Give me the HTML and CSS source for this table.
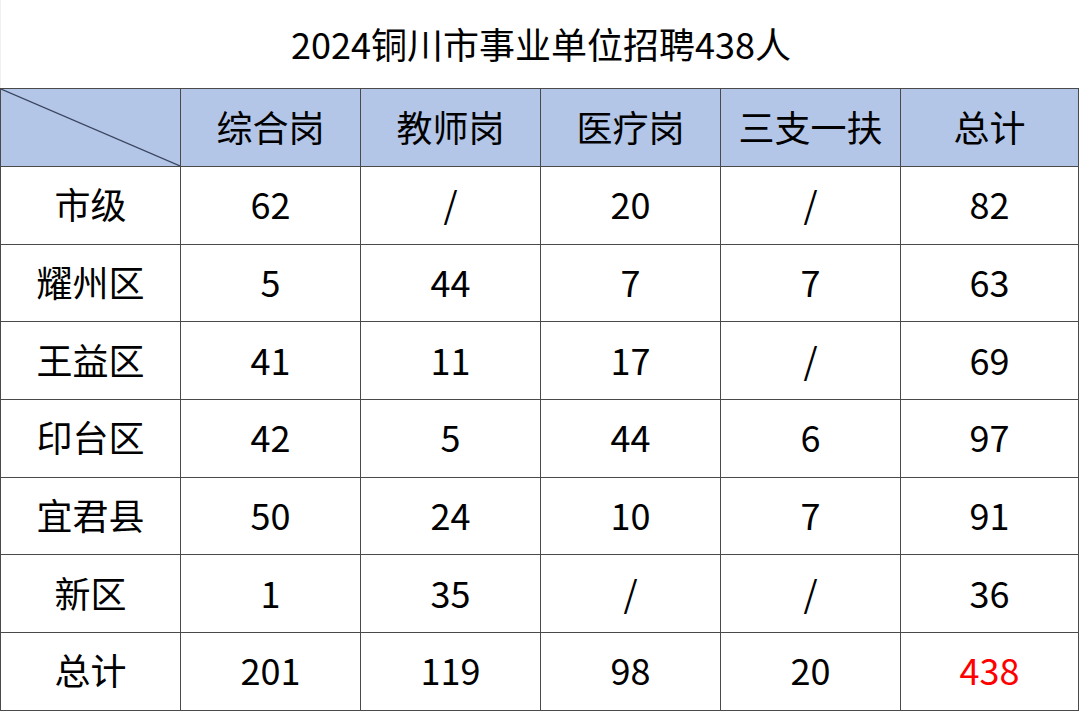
FILE: index.html
```html
<!DOCTYPE html>
<html lang="zh-CN">
<head>
<meta charset="utf-8">
<title>2024铜川市事业单位招聘438人</title>
<link rel="stylesheet" href="styles.css">
</head>
<body>
<div class="page">
  <div class="title">2024铜川市事业单位招聘438人</div>
  <div class="grid">
    <div class="cell head corner"><svg class="diag" viewBox="0 0 100 100" preserveAspectRatio="none"><line x1="0" y1="0" x2="100" y2="100" vector-effect="non-scaling-stroke"/></svg></div>
    <div class="cell head">综合岗</div>
    <div class="cell head">教师岗</div>
    <div class="cell head">医疗岗</div>
    <div class="cell head">三支一扶</div>
    <div class="cell head">总计</div>

    <div class="cell">市级</div><div class="cell">62</div><div class="cell">/</div><div class="cell">20</div><div class="cell">/</div><div class="cell">82</div>
    <div class="cell">耀州区</div><div class="cell">5</div><div class="cell">44</div><div class="cell">7</div><div class="cell">7</div><div class="cell">63</div>
    <div class="cell">王益区</div><div class="cell">41</div><div class="cell">11</div><div class="cell">17</div><div class="cell">/</div><div class="cell">69</div>
    <div class="cell">印台区</div><div class="cell">42</div><div class="cell">5</div><div class="cell">44</div><div class="cell">6</div><div class="cell">97</div>
    <div class="cell">宜君县</div><div class="cell">50</div><div class="cell">24</div><div class="cell">10</div><div class="cell">7</div><div class="cell">91</div>
    <div class="cell">新区</div><div class="cell">1</div><div class="cell">35</div><div class="cell">/</div><div class="cell">/</div><div class="cell">36</div>
    <div class="cell">总计</div><div class="cell">201</div><div class="cell">119</div><div class="cell">98</div><div class="cell">20</div><div class="cell total">438</div>
  </div>
</div>
</body>
</html>
```

FILE: styles.css
```css
html, body {
  margin: 0;
  padding: 0;
  background: #ffffff;
}
body {
  width: 1080px;
  height: 712px;
  overflow: hidden;
  font-family: "Noto Sans CJK SC", "Noto Sans", sans-serif;
  color: #000;
}
.page {
  width: 1079px;
}
.title {
  height: 88px;
  display: flex;
  align-items: center;
  justify-content: center;
  font-size: 36px;
  padding-left: 2px;
  padding-bottom: 3px;
  box-sizing: border-box;
  border-left: 1px solid #f0f0f0;
}
.grid {
  display: grid;
  grid-template-columns: 179px 179px 179px 179px 179px 177px;
  grid-template-rows: 77px repeat(7, 76.7px);
  gap: 1px;
  background: #4a4a4a;
  border: 1px solid #4a4a4a;
  width: 1077px;
}
.cell {
  background: #ffffff;
  display: flex;
  align-items: center;
  justify-content: center;
  font-size: 36px;
  line-height: 1;
  padding-bottom: 4px;
  box-sizing: border-box;
}
.head {
  background: #b4c6e7;
}
.corner {
  position: relative;
  padding: 0;
}
.diag {
  position: absolute;
  left: 0;
  top: 0;
  width: 100%;
  height: 100%;
}
.diag line {
  stroke: #3a4660;
  stroke-width: 1.2;
}
.total {
  color: #ff0000;
}
```
